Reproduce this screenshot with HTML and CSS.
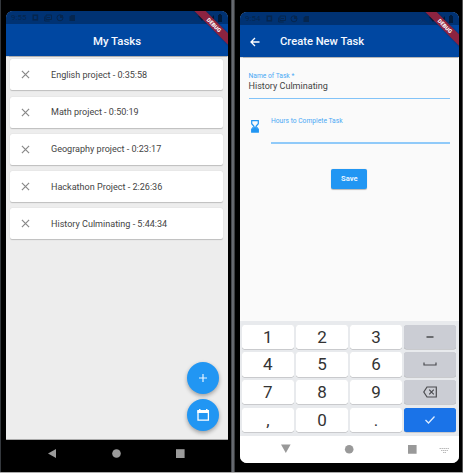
FILE: index.html
```html
<!DOCTYPE html>
<html lang="en">
<head>
<meta charset="utf-8">
<title>My Tasks</title>
<link rel="stylesheet" href="styles.css">
</head>
<body>
<svg class="defs" width="0" height="0">
  <symbol id="status" viewBox="0 0 44 8"><rect x="1.2" y="1.2" width="4.2" height="4.6" fill="none" stroke="currentColor" stroke-width="1.5"/><path d="M14 1h5.500v4.500H14zM12.700 2.500V7h5M15 4l1-1 1 1 1-1" fill="none" stroke="currentColor"/><circle cx="28" cy="3.8" r="3" fill="none" stroke="currentColor"/><path d="M28 1h3v3h-3z" fill="currentColor"/><path d="M39.500 1H43v6h-5.500V2.500z" fill="currentColor"/></symbol>
  <symbol id="signal" viewBox="0 0 26 8"><path d="M0 2q4-3.5 8 0L4 7z M16 1v6h-5z M20 1h1V0h2v1h1v7h-4z" fill="currentColor"/></symbol>
  <symbol id="close" viewBox="0 0 10 10"><path d="M1 1l8 8M9 1L1 9" fill="none" stroke="currentColor" stroke-width="1.300"/></symbol>
</svg>
<main class="stage">
  <section class="phone tasks">
    <div class="screen">
      <header>
        <div class="status"><span>9:55</span><svg class="notices"><use href="#status"/></svg><svg class="signal"><use href="#signal"/></svg></div>
        <h1>My Tasks</h1>
        <div class="debug">DEBUG</div>
      </header>
      <ul>
        <li><svg><use href="#close"/></svg><span>English project - 0:35:58</span></li>
        <li><svg><use href="#close"/></svg><span>Math project - 0:50:19</span></li>
        <li><svg><use href="#close"/></svg><span>Geography project - 0:23:17</span></li>
        <li><svg><use href="#close"/></svg><span>Hackathon Project - 2:26:36</span></li>
        <li><svg><use href="#close"/></svg><span>History Culminating - 5:44:34</span></li>
      </ul>
      <div class="actions">
        <button aria-label="Add"><svg width="32" height="32" viewBox="0 0 32 32"><path d="M16 12v8M12 16h8" stroke="#e9f5ff" stroke-width="1.2"/></svg></button>
        <button aria-label="Calendar"><svg width="32" height="32" viewBox="0 0 32 32"><path d="M11 12h10.4v9.2H11z" fill="none" stroke="#fff" stroke-width="1.3"/><path d="M10.4 11h11.6v3H10.4zM12 10h1.5v2H12zM19 10h1.5v2H19z" fill="#fff"/></svg></button>
      </div>
    </div>
    <svg class="nav" width="222" height="31" viewBox="0 0 222 31" fill="#9b9b9b"><path d="M42 13.5l8-4.5v9z"/><circle cx="110.5" cy="13.5" r="4.3"/><path d="M170 9.2h8.6v8.8H170z"/></svg>
  </section>
  <div class="divider"></div>
  <section class="phone create">
    <div class="screen">
      <header>
        <div class="status"><span>9:54</span><svg class="notices"><use href="#status"/></svg><svg class="signal"><use href="#signal"/></svg></div>
        <div class="bar"><svg width="10" height="10" viewBox="0 0 10 10"><path d="M9.500 5H1M5 1L1 5l4 4" fill="none" stroke="#fff" stroke-width="1.3"/></svg><h1>Create New Task</h1></div>
        <div class="debug">DEBUG</div>
      </header>
      <form>
        <label class="name"><small>Name of Task *</small><span>History Culminating</span></label>
        <div class="hours">
          <svg width="8" height="13" viewBox="0 0 8 13"><path d="M.7.7h6.6v3L5 6.3l2.3 2.8v3H.7v-3L3 6.3.7 3.7z" fill="none" stroke="#2196f3" stroke-width="1.2"/><path d="M4 6.500l3.300 3V12H.7V9.500z" fill="#2196f3"/></svg>
          <label><small>Hours to Complete Task</small></label>
        </div>
        <button type="button" class="save">Save</button>
      </form>
      <div class="keys">
        <b>1</b><b>2</b><b>3</b><b class="alt"><svg viewBox="0 0 14 12"><path d="M3.500 6h7" stroke="#4a4b4f" stroke-width="1.4"/></svg></b>
        <b>4</b><b>5</b><b>6</b><b class="alt"><svg viewBox="0 0 14 12"><path d="M1 4.500v2.500h12V4.500" fill="none" stroke="#4a4b4f" stroke-width="1.200"/></svg></b>
        <b>7</b><b>8</b><b>9</b><b class="alt"><svg viewBox="0 0 14 12"><path d="M4 1h9.300v10H4L.8 6zM6.200 3.700l4.600 4.600M10.800 3.700L6.200 8.300" fill="none" stroke="#4a4b4f" stroke-width="1.200"/></svg></b>
        <b>,</b><b>0</b><b>.</b><b class="done"><svg viewBox="0 0 14 12"><path d="M2.500 6l3 3 6-6.500" fill="none" stroke="#dcecff" stroke-width="1.300"/></svg></b>
      </div>
      <svg class="nav" width="219" height="27" viewBox="0 0 219 27" fill="#999"><path d="M41 8.500h9.600l-4.800 8.500z"/><circle cx="109.200" cy="13.300" r="4.300"/><path d="M168 9h8.600v8.800H168z"/><path d="M199.500 12.500h10M201 14.500h7M203 16.500h3" stroke="#bbb" stroke-width="1" stroke-dasharray="1.500 .5"/></svg>
    </div>
  </section>
</main>
</body>
</html>
```
FILE: styles.css
```css
* { box-sizing: border-box; }
body { margin: 0; font-family: Roboto, sans-serif; background: #000; }
.defs { position: absolute; }
.stage { display: flex; width: 463px; height: 473px; overflow: hidden; border-bottom: 1px solid #aaa; }
.phone { background: #000; flex: none; }
.tasks { width: 231px; padding: 11px 3px 0 5px; border-left: 1px solid #34383d; }
.divider { width: 4px; background: linear-gradient(90deg, #32363b, #72757b 45%, #5c6066 70%, #222); }
.create { width: 228px; padding: 12px 4px 0 5px; border-right: 1px solid #555; }
.screen { position: relative; overflow: hidden; display: flex; flex-direction: column; }
.tasks .screen { width: 222px; height: 429px; background: #ededed; border-radius: 7px 7px 0 0; border-bottom: 1px solid #aaa; }
.create .screen { width: 219px; height: 451px; background: #fafafa; border-radius: 7px; }
header { position: relative; overflow: hidden; height: 45px; background: #0047a1; flex: none; box-shadow: 0 .5px 1px #0004; }
.status { height: 13px; background: #003273; color: #05264f; display: flex; align-items: center; padding: 0 4px 0 5px; font-size: 8px; }
.status span { width: 21px; }
.notices { width: 44px; height: 8px; }
.signal { width: 26px; height: 8px; margin-left: auto; color: #001b3c; }
h1 { margin: 0; color: #f4f8ff; font-size: 11.400px; font-weight: 500; line-height: 34px; text-align: center; }
.bar { display: flex; align-items: center; gap: 20px; padding: 0 11px 0 10px; height: 33px; }
.bar h1 { font-size: 11.200px; line-height: 33px; }
.debug { position: absolute; right: -18px; top: 9.500px; width: 64px; height: 8px; background: #8c2340; color: #fff; font-size: 5.500px; font-weight: 900; line-height: 8px; text-align: center; transform: rotate(45deg); box-shadow: 0 0 2px #0005; }
ul { list-style: none; margin: 0; padding: 3.300px 5px 3px 4px; display: flex; flex-direction: column; gap: 6.300px; }
li { height: 31px; background: #fff; border-radius: 2px; box-shadow: 0 .5px 1px #0003; display: flex; align-items: center; padding-left: 11px; gap: 21px; color: #444; font-size: 9.050px; }
li svg { width: 9px; height: 9px; color: #888; flex: none; }
.actions { margin: auto 9px 8px auto; display: flex; flex-direction: column; gap: 5.500px; }
.actions button { width: 32px; height: 32px; padding: 0; border: 0; border-radius: 50%; background: #2196f3; box-shadow: 0 2px 4px #0005; }
.nav { display: block; }
form { padding: 0 9px 0 8.500px; display: flex; flex-direction: column; }
small { display: block; color: #4ba9f5; font-size: 6.700px; line-height: 8px; }
.name { margin-top: 15px; height: 27px; border-bottom: 1px solid #82c3f8; }
.name span { display: block; color: #444; font-size: 9.050px; line-height: 12px; }
.hours { display: flex; justify-content: space-between; margin-top: 17.500px; height: 27.500px; padding-left: 2.500px; }
.hours > svg { margin-top: 3px; }
.hours label { width: 179px; border-bottom: 2px solid #90caf9; }
.save { align-self: center; width: 36px; height: 20px; margin-top: 24.500px; padding: 0; border: 0; border-radius: 2px; background: #2196f3; color: #e5f3ff; font: 700 7.600px Roboto, sans-serif; box-shadow: 0 .5px 1px #0004; }
.keys { margin-top: auto; height: 115px; padding: 3.500px 3px 4px 2px; display: grid; grid-template: repeat(4, 1fr) / repeat(4, 1fr); gap: 3.500px 2.500px; background: #e8eaed; }
.keys b { background: #fff; border-radius: 2.500px; box-shadow: 0 .5px .5px #0004; display: flex; align-items: center; justify-content: center; font-size: 17px; font-weight: 400; color: #333; }
.keys .alt { background: #cbcdd4; }
.keys .done { background: #1a73e8; }
.keys svg { width: 14px; height: 12px; }
.create .nav { background: #fff; flex: none; }
```
